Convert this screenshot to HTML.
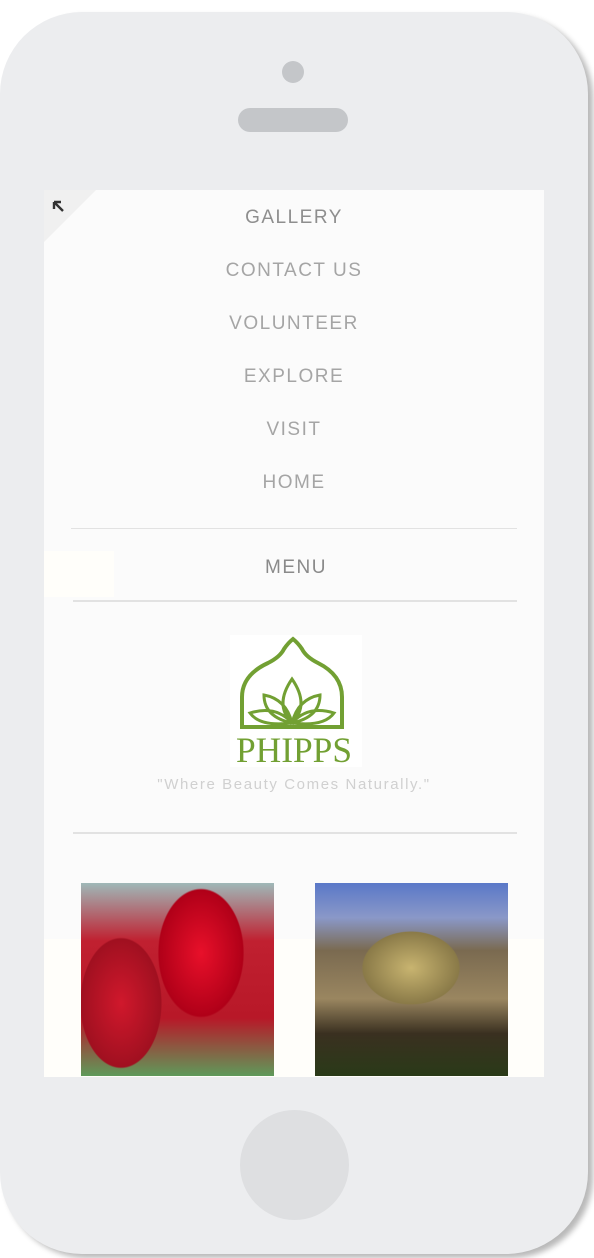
<!DOCTYPE html>
<html><head><style>
*{margin:0;padding:0;box-sizing:border-box}
body{width:594px;height:1258px;background:#fff;position:relative;overflow:hidden;font-family:"Liberation Sans",sans-serif}
.phone{position:absolute;left:0;top:12px;width:588px;height:1242px;background:#ecedef;border-radius:82px;box-shadow:5px 4px 6px rgba(0,0,0,.28)}
.cam{position:absolute;left:282px;top:49px;width:22px;height:22px;border-radius:50%;background:#c4c6c9}
.spk{position:absolute;left:238px;top:96px;width:110px;height:24px;border-radius:12px;background:#c4c6c9}
.home{position:absolute;left:240px;top:1098px;width:109px;height:110px;border-radius:50%;background:#dedfe1}
.screen{position:absolute;left:44px;top:190px;width:500px;height:887px;background:#fbfbfb;overflow:hidden}
.nav{position:absolute;left:0;width:500px;text-align:center;color:#a5a5a5;font-size:19px;letter-spacing:1.5px}
.hr{position:absolute;height:2px;background:#e2e2e2}
.corner{position:absolute;left:0;top:0;width:0;height:0;border-top:52px solid #f0f0f0;border-right:52px solid transparent}
</style></head><body>
<div class="phone">
<div class="cam"></div><div class="spk"></div><div class="home"></div>
</div>
<div class="screen">
<div class="corner"></div>
<svg style="position:absolute;left:8px;top:10px" width="14" height="14" viewBox="0 0 14 14"><path d="M2 2h7M2 2v7M2 2l9 9" stroke="#333" stroke-width="2.4" fill="none"/></svg>
<div class="nav" style="top:17px;color:#8e8e8e">GALLERY</div>
<div class="nav" style="top:70px">CONTACT US</div>
<div class="nav" style="top:123px">VOLUNTEER</div>
<div class="nav" style="top:176px">EXPLORE</div>
<div class="nav" style="top:229px">VISIT</div>
<div class="nav" style="top:282px">HOME</div>
<div class="hr" style="left:27px;width:446px;top:338px;height:1px"></div>
<div style="position:absolute;left:0;top:361px;width:70px;height:46px;background:#fffefa"></div>
<div class="nav" style="top:367px;color:#8a8a8a;left:2px">MENU</div>
<div class="hr" style="left:29px;width:444px;top:410px"></div>
<div style="position:absolute;left:186px;top:445px;width:132px;height:132px;background:#fff"></div>
<svg style="position:absolute;left:186px;top:445px" width="132" height="132" viewBox="0 0 132 132">
<path d="M12 92V62Q12 40 38 28Q50 22 54 14Q58 8 63 4Q68 8 72 14Q76 22 88 28Q112 40 112 62V92Z" fill="none" stroke="#72a033" stroke-width="4"/>
<path d="M62 88Q44 70 62 44Q80 70 62 88Z M62 88Q34 82 34 60Q56 64 62 88Z M62 88Q90 82 90 60Q68 64 62 88Z M62 88Q30 92 20 78Q46 70 62 88Z M62 88Q94 92 104 78Q78 70 62 88Z" fill="none" stroke="#72a033" stroke-width="3"/>
<text x="64" y="127" text-anchor="middle" font-family="Liberation Serif,serif" font-size="36" fill="#72a033" textLength="116" lengthAdjust="spacingAndGlyphs">PHIPPS</text>
</svg>
<div class="nav" style="top:586px;font-size:15px;color:#d0d0d0;letter-spacing:1.6px">"Where Beauty Comes Naturally."</div>
<div class="hr" style="left:29px;width:444px;top:642px"></div>
<div style="position:absolute;left:0;top:749px;width:500px;height:138px;background:#fffefa"></div>
<div style="position:absolute;left:37px;top:693px;width:193px;height:193px;background:radial-gradient(ellipse 60px 90px at 120px 70px,#e8102a,#b00018 70%,transparent 72%),radial-gradient(ellipse 50px 80px at 40px 120px,#d0182c,#a01020 80%,transparent 82%),linear-gradient(180deg,#9fb8b8 0%,#c02030 30%,#b81828 70%,#5f9a5a 100%)"></div>
<div style="position:absolute;left:271px;top:693px;width:193px;height:193px;background:radial-gradient(ellipse 60px 45px at 96px 85px,#c8b470,#8a7a48 80%,transparent 82%),linear-gradient(180deg,#5a78c8 0%,#8a98c8 18%,#7a6a50 35%,#9a8660 60%,#3a3020 78%,#2a3a18 100%)"></div>
</div>
</body></html>
